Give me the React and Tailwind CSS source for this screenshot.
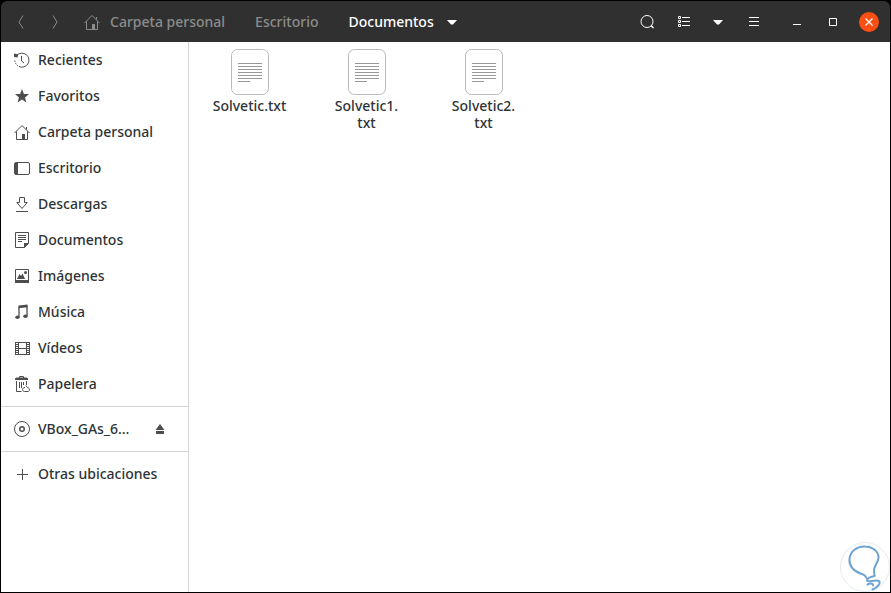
import React from 'react';

const Icon = ({ children, className = '' }) => (
  <svg
    className={`h-4 w-4 shrink-0 ${className}`}
    viewBox="0 0 16 16"
    fill="none"
    stroke="currentColor"
    strokeWidth="1"
    aria-hidden="true"
  >
    {children}
  </svg>
);

const HomeIcon = () => (
  <Icon>
    <path d="M.5 9 8 1.500 15.500 9M2.500 7.500v8h6M13.500 7.500v8h-5M12.500 3v2.500" />
    <path d="M8 10h3v6H8z" fill="currentColor" stroke="none" />
  </Icon>
);

const RecentIcon = () => (
  <Icon>
    <path d="M3 3.200A7 7 0 1 1 5 14.500" />
    <path d="M.8 8.500A7 7 0 0 0 5 14.500" strokeDasharray="1.500 1" />
    <path d="M0 1.500 4.200 2.500 3.500 5.500 0 5z" fill="currentColor" stroke="none" />
    <path d="M7.500 4v5l2.500 2" />
  </Icon>
);

const StarIcon = () => (
  <Icon>
    <path
      d="m8 1 1.900 4.900 5.100.2-4 3.300 1.400 5.100L8 11.600l-4.400 2.900L5 9.400 1 6.100l5.100-.2z"
      fill="currentColor"
      stroke="none"
    />
  </Icon>
);

const DesktopIcon = () => (
  <Icon>
    <rect x=".5" y="2.500" width="15" height="12" rx="1.500" />
    <path d="M1 3h3v11H1z" fill="currentColor" stroke="none" />
  </Icon>
);

const DownloadIcon = () => (
  <Icon>
    <path d="M5.500 1.500h5v5h2.700L8 12.500 2.800 6.500h2.700zM2 15.500h12" />
  </Icon>
);

const DocumentIcon = () => (
  <Icon>
    <path d="M1.500.5h13v11l-4 4h-9z" />
    <path d="M10 11h5l-5 5z" fill="currentColor" stroke="none" />
    <path d="M4 3.500h8M4 5.500h8M4 7.500h8M4 9.500h4" />
  </Icon>
);

const ImageIcon = () => (
  <Icon>
    <path d="M1.500 1.500h13v12h-13z" />
    <path d="M1 12h14v3H1z" fill="currentColor" stroke="none" />
    <path d="m3 11 2.500-5L7 8l1.500-2.500L11 11z" fill="currentColor" stroke="none" />
    <circle cx="11.500" cy="4.500" r="1.500" fill="currentColor" stroke="none" />
  </Icon>
);

const MusicIcon = () => (
  <Icon>
    <path d="M5 13V3M13 12V2" strokeWidth="1.300" />
    <path d="M4.500 1.500 13.600.5v2.700l-9.100 1z" fill="currentColor" stroke="none" />
    <ellipse cx="3.500" cy="13.300" rx="2.200" ry="1.700" fill="currentColor" stroke="none" />
    <ellipse cx="11.400" cy="12.300" rx="2.200" ry="1.700" fill="currentColor" stroke="none" />
  </Icon>
);

const VideoIcon = () => (
  <Icon>
    <path d="M1.500 2v13M4.500 2v13M12.500 2v13M15.500 2v13M4 2.500h9M4 8.500h9M4 14.500h9" />
    <path d="M3 2v13M14 2v13" strokeWidth="2" strokeDasharray="1 1" />
  </Icon>
);

const TrashIcon = () => (
  <Icon>
    <path d="M5.500 2V.5h4V2" />
    <path d="M1 4V2.500L2.500 1.500h10L14 2.500V4z" fill="currentColor" stroke="none" />
    <path d="M2.500 5v10.500h5M12.500 5v4M5.500 6v6M7.500 6v6M9.500 6v3" />
    <path d="M11 11.500c-1.500 0-2.500 1-2.500 2s.8 2 2 2h3.500c1 0 1.500-.8 1.500-1.800s-1-2.200-2.200-2.200l-1.300-2" />
  </Icon>
);

const DiscIcon = () => (
  <Icon>
    <circle cx="8" cy="8" r="7.500" />
    <circle cx="8" cy="8" r="2.250" strokeWidth="1.500" />
  </Icon>
);

const PlusIcon = () => (
  <Icon>
    <path d="M8.500 3v11M3 8.500h11" />
  </Icon>
);

const EjectIcon = () => (
  <Icon>
    <path d="M8 3 12.500 9h-9zM4 10h8v3H4z" fill="currentColor" stroke="none" />
  </Icon>
);

const CaretIcon = () => (
  <Icon>
    <path d="M3 6h10l-4 4.500H7z" fill="currentColor" stroke="none" />
  </Icon>
);

const FileIcon = () => (
  <svg className="h-[46px] w-[38px]" viewBox="0 0 38 46" fill="none" aria-hidden="true">
    <rect x=".5" y=".5" width="37" height="45" rx="6" fill="#fff" stroke="#b9b9b9" />
    <path
      d="M7 14.500h24M7 17.500h24M7 20.500h24M7 23.500h24M7 26.500h24M7 29.500h24M7 32.500h12"
      stroke="#999"
    />
  </svg>
);

const places = [
  { name: 'Recientes', icon: RecentIcon },
  { name: 'Favoritos', icon: StarIcon },
  { name: 'Carpeta personal', icon: HomeIcon },
  { name: 'Escritorio', icon: DesktopIcon },
  { name: 'Descargas', icon: DownloadIcon },
  { name: 'Documentos', icon: DocumentIcon },
  { name: 'Imágenes', icon: ImageIcon },
  { name: 'Música', icon: MusicIcon },
  { name: 'Vídeos', icon: VideoIcon },
  { name: 'Papelera', icon: TrashIcon },
];

const files = [
  ['Solvetic.', 'txt'],
  ['Solvetic1.', 'txt'],
  ['Solvetic2.', 'txt'],
];

const PlaceLink = ({ name, icon: PlaceIcon }) => (
  <a href="#" className="flex h-9 min-w-0 flex-1 items-center gap-2 pl-[13px]">
    <span className="text-[#4d4d4d]">
      <PlaceIcon />
    </span>
    <span className="whitespace-nowrap">{name}</span>
  </a>
);

const HeaderBar = () => (
  <header className="flex h-[41px] shrink-0 items-center justify-between rounded-t-md bg-[#303030] pr-[11px] pl-3 text-white">
    <nav className="flex items-center">
      <div className="flex gap-[18px] text-[#8a8a8a]">
        <button aria-label="Atrás">
          <Icon>
            <path d="M10 1.500 6 8l4 6.500" />
          </Icon>
        </button>
        <button aria-label="Adelante">
          <Icon>
            <path d="m6 1.500 4 6.500-4 6.500" />
          </Icon>
        </button>
      </div>
      <div className="ml-[21px] flex items-center gap-[30px] text-[#8c8c8c]">
        <button className="flex items-center gap-2.5">
          <HomeIcon />
          Carpeta personal
        </button>
        <button>Escritorio</button>
        <button className="flex items-center gap-2.5 text-white">
          Documentos
          <CaretIcon />
        </button>
      </div>
    </nav>
    <div className="flex items-center gap-5">
      <button aria-label="Buscar">
        <Icon>
          <circle cx="9" cy="7.500" r="6" />
          <path d="m13 11.500 2.500 2.500" strokeWidth="1.500" />
        </Icon>
      </button>
      <button aria-label="Vista de lista">
        <Icon>
          <path d="M4.500 2.500h2v2h-2zM4.500 6.500h2v2h-2zM4.500 10.500h2v2h-2zM8 3.500h8M8 7.500h8M8 11.500h8" />
        </Icon>
      </button>
      <button aria-label="Opciones de vista">
        <CaretIcon />
      </button>
      <button aria-label="Menú">
        <Icon>
          <path d="M3 3.500h10M3 7.500h10M3 11.500h10" />
        </Icon>
      </button>
      <button aria-label="Minimizar" className="ml-[7px]">
        <Icon>
          <path d="M4 10.500h8" />
        </Icon>
      </button>
      <button aria-label="Maximizar">
        <Icon>
          <path d="M4.500 4.500h7v7h-7z" />
        </Icon>
      </button>
      <button
        aria-label="Cerrar"
        className="-ml-0.5 flex h-5 w-5 items-center justify-center rounded-full bg-[#fc4f14]"
      >
        <Icon>
          <path d="m4.500 4.500 7 7m0-7-7 7" strokeWidth="1.200" />
        </Icon>
      </button>
    </div>
  </header>
);

const Sidebar = () => (
  <aside className="w-[188px] shrink-0 border-r border-[#d3d5d8]">
    <nav className="pb-1">
      {places.map((place) => (
        <PlaceLink key={place.name} {...place} />
      ))}
    </nav>
    <div className="flex items-center border-y border-[#d3d5d8] py-1 pr-5">
      <PlaceLink name="VBox_GAs_6…" icon={DiscIcon} />
      <button aria-label="Expulsar" className="text-[#4d4d4d]">
        <EjectIcon />
      </button>
    </div>
    <nav className="pt-1">
      <PlaceLink name="Otras ubicaciones" icon={PlusIcon} />
    </nav>
  </aside>
);

const FileItem = ({ base, extension }) => (
  <li className="flex w-[117px] flex-col items-center gap-0.5">
    <FileIcon />
    <span className="w-[78px] text-center leading-[17px]">
      {base}
      <wbr />
      {extension}
    </span>
  </li>
);

const Watermark = () => (
  <svg
    className="absolute right-0 bottom-0 h-[50px] w-[50px]"
    viewBox="0 0 50 50"
    fill="none"
    aria-hidden="true"
  >
    <circle cx="25" cy="25" r="24.500" stroke="#e3eaf2" />
    <path
      d="M26.500 36c-1.500-4-4-3.500-6-4.500C14 29 9 24 9.500 17 10 9.500 17 4 25 4.500c8 .3 14 5 13.500 11.500-.3 4-4 7.500-4.500 12 0 2 .3 4 .5 5.500"
      stroke="#6fa3d0"
      strokeWidth="2"
      strokeLinecap="round"
    />
    <path
      d="M34.500 34c-4 .8-7.500 2.500-7.500 4.500s9-1 12 .5c2 2-1 6-6.500 8.500"
      stroke="#6fa3d0"
      strokeWidth="2"
      strokeLinecap="round"
    />
    <path d="M27.500 42.500c3-1.500 6-1 5.500 1" stroke="#6fa3d0" strokeWidth="2" strokeLinecap="round" />
  </svg>
);

const App = () => {
  return (
    <div className="flex min-h-screen flex-col border border-black bg-black font-['Noto_Sans',sans-serif] text-sm font-medium text-[#2e3436]">
      <HeaderBar />
      <div className="relative flex flex-1 bg-white">
        <Sidebar />
        <main className="flex-1 pt-[7px] pl-0.5">
          <ul className="flex flex-wrap">
            {files.map(([base, extension]) => (
              <FileItem key={base} base={base} extension={extension} />
            ))}
          </ul>
        </main>
        <Watermark />
      </div>
    </div>
  );
};

export default App;
